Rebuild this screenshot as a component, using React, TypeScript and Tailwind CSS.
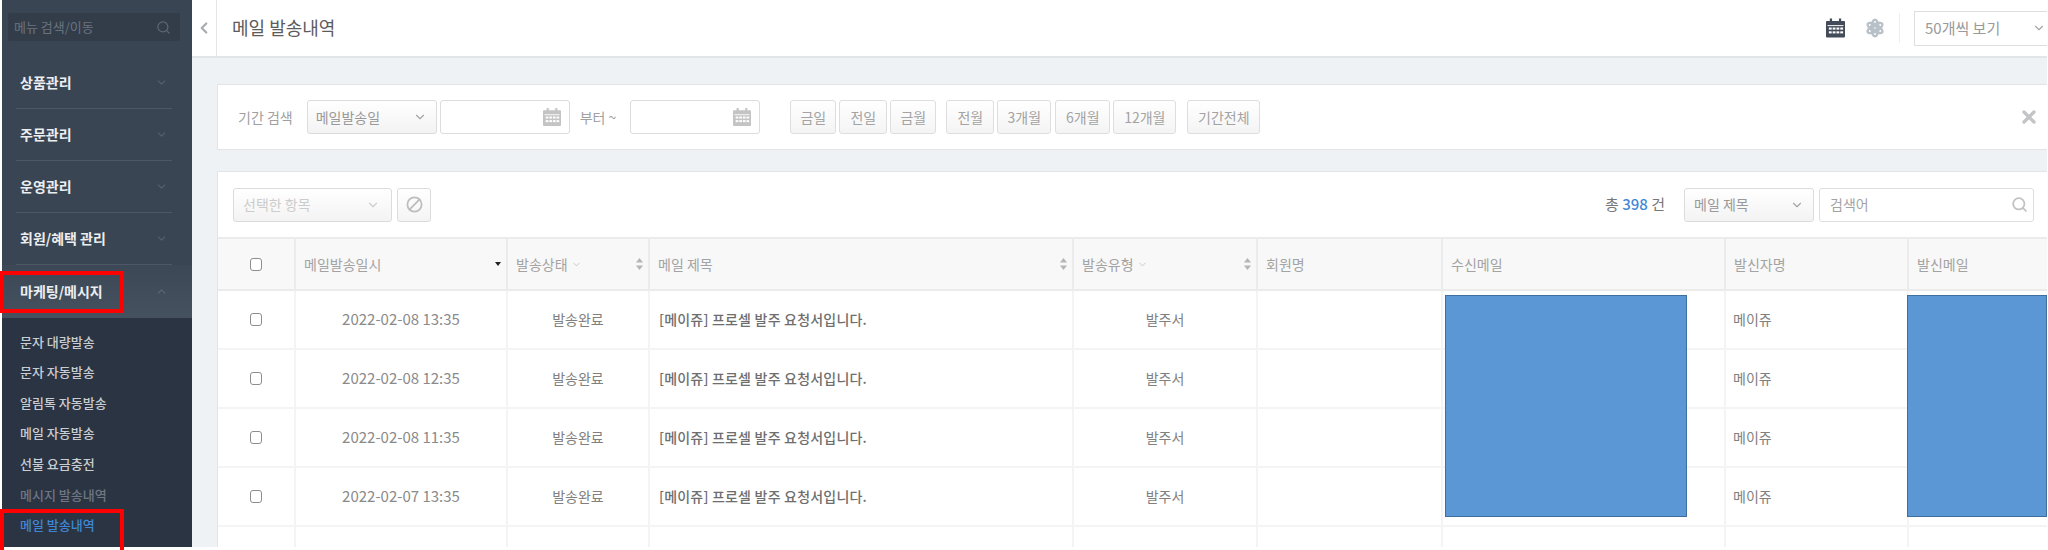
import { Ban, ChevronDown, ChevronLeft, ChevronUp, Search, X } from "lucide-react";

const groups = ["상품관리", "주문관리", "운영관리", "회원/혜택 관리"];

const subMenu = [
  { label: "문자 대량발송", color: "text-[#c9cdd2]" },
  { label: "문자 자동발송", color: "text-[#c9cdd2]" },
  { label: "알림톡 자동발송", color: "text-[#c9cdd2]" },
  { label: "메일 자동발송", color: "text-[#c9cdd2]" },
  { label: "선불 요금충전", color: "text-[#c9cdd2]" },
  { label: "메시지 발송내역", color: "text-[#6d7682]" },
  { label: "메일 발송내역", color: "text-[#3f87d6]" },
];

const rangeButtons = [
  { label: "금일", className: "w-[46px]" },
  { label: "전일", className: "w-[48px] ml-[3px]" },
  { label: "금월", className: "w-[46px] ml-[3px]" },
  { label: "전월", className: "w-[48px] ml-[10px]" },
  { label: "3개월", className: "w-[54px] ml-[3px]" },
  { label: "6개월", className: "w-[55px] ml-[4px]" },
  { label: "12개월", className: "w-[63px] ml-[3px]" },
  { label: "기간전체", className: "w-[73px] ml-[11px]" },
];

const rows = ["2022-02-08 13:35", "2022-02-08 12:35", "2022-02-08 11:35", "2022-02-07 13:35"];

const gridCols = "grid grid-cols-[76px_212px_142px_424px_184px_185px_283px_183px_140px]";

function CalendarIcon({ className }: { className?: string }) {
  return (
    <svg viewBox="0 0 20 20" className={className} fill="currentColor">
      <rect x="4" y="0" width="2.4" height="4" />
      <rect x="13.6" y="0" width="2.4" height="4" />
      <path d="M1 2.5h18a1 1 0 0 1 1 1V19a1 1 0 0 1-1 1H1a1 1 0 0 1-1-1V3.5a1 1 0 0 1 1-1z" />
      <g fill="#fff">
        <rect x="1.6" y="7" width="16.8" height="1" />
        <rect x="3" y="9.5" width="3" height="2.2" />
        <rect x="7" y="9.5" width="3" height="2.2" />
        <rect x="11" y="9.5" width="3" height="2.2" />
        <rect x="15" y="9.5" width="3" height="2.2" />
        <rect x="3" y="13.5" width="3" height="2.2" />
        <rect x="7" y="13.5" width="3" height="2.2" />
        <rect x="11" y="13.5" width="3" height="2.2" />
        <rect x="15" y="13.5" width="3" height="2.2" />
      </g>
    </svg>
  );
}

function GearIcon({ className }: { className?: string }) {
  return (
    <svg viewBox="0 0 20 20" className={className} fill="none" stroke="currentColor" strokeWidth="2.4">
      <ellipse cx="10" cy="10" rx="3.4" ry="8.4" />
      <ellipse cx="10" cy="10" rx="3.4" ry="8.4" transform="rotate(60 10 10)" />
      <ellipse cx="10" cy="10" rx="3.4" ry="8.4" transform="rotate(120 10 10)" />
      <circle cx="10" cy="10" r="2" />
    </svg>
  );
}

function SortIcon() {
  return (
    <svg viewBox="0 0 7 12" className="w-[7px] h-[12px] text-[#b5b5b5]" fill="currentColor">
      <path d="M3.5 0L7 4.5H0z" />
      <path d="M3.5 12L0 7.5h7z" />
    </svg>
  );
}

function SelectBox({ label, className, muted }: { label: string; className: string; muted?: boolean }) {
  return (
    <div className={`flex h-[34px] items-center justify-between rounded-[3px] border border-[#dcdcdc] bg-gradient-to-b from-white to-[#f3f3f3] ${className}`}>
      <span className={muted ? "text-[#cccccc]" : "text-[#999999]"}>{label}</span>
      <ChevronDown className={`w-[14px] h-[14px] ${muted ? "text-[#cccccc]" : "text-[#a5a5a5]"}`} strokeWidth={2} />
    </div>
  );
}

function DateInput() {
  return (
    <div className="flex h-[34px] w-[130px] items-center justify-end rounded-[3px] border border-[#dcdcdc] bg-white pr-[8px]">
      <CalendarIcon className="w-[18px] h-[18px] text-[#c4c4c4]" />
    </div>
  );
}

function HeadCell({ label, dropdown, sort }: { label: string; dropdown?: boolean; sort?: "down" | "both" }) {
  return (
    <div className="flex items-center border-l-2 border-[#ebebeb] pl-[8px] pr-[5px] text-[#a3a3a3]">
      <span>{label}</span>
      {dropdown && <ChevronDown className="ml-[3px] w-[11px] h-[11px] text-[#b5b5b5]" strokeWidth={1.5} />}
      {sort === "down" && <span className="ml-auto h-0 w-0 border-x-[3px] border-t-[4px] border-x-transparent border-t-[#222222]" />}
      {sort === "both" && (
        <span className="ml-auto flex">
          <SortIcon />
        </span>
      )}
    </div>
  );
}

function Checkbox() {
  return <span className="block h-[13px] w-[12px] rounded-[3px] border border-[#8d8d8d] bg-white" />;
}

function Row({ date }: { date: string }) {
  const cell = "flex items-center border-l-2 border-[#f4f4f4]";
  return (
    <div className={`${gridCols} h-[59px] border-b-2 border-[#f4f4f4] text-[#808080]`}>
      <div className="flex items-center justify-center">
        <Checkbox />
      </div>
      <div className={`${cell} justify-center text-[15px] text-[#8a8a8a]`}>{date}</div>
      <div className={`${cell} justify-center`}>발송완료</div>
      <div className={`${cell} pl-[9px] font-medium tracking-[0.2px] text-[#6e6e6e]`}>[메이쥬] 프로셀 발주 요청서입니다.</div>
      <div className={`${cell} justify-center`}>발주서</div>
      <div className={cell} />
      <div className={cell} />
      <div className={`${cell} pl-[7px]`}>메이쥬</div>
      <div className={cell} />
    </div>
  );
}

export default function App() {
  return (
    <div
      className="relative flex h-[550px] w-[2048px] overflow-hidden bg-white pb-[3px] pl-[2px] pr-[1px] text-[14px]"
      style={{ fontFamily: '"Noto Sans CJK KR", "Noto Sans", sans-serif' }}
    >
      {/* sidebar */}
      <aside className="flex w-[190px] shrink-0 flex-col bg-[#3a4553]">
        <div className="h-[57px] shrink-0 pl-[6px] pr-[12px] pt-[13px]">
          <div className="flex h-[28px] items-center justify-between rounded-[2px] bg-[#333d4a] pl-[6px] pr-[9px] text-[13px] text-[#697380]">
            <span>메뉴 검색/이동</span>
            <Search className="w-[15px] h-[15px] text-[#5c6774]" strokeWidth={2} />
          </div>
        </div>
        {groups.map((g) => (
          <div key={g} className="ml-[14px] mr-[20px] flex h-[52px] shrink-0 items-center justify-between border-b border-[#4d5866] pl-[4px] pr-[4px]">
            <span className="font-bold text-[#eceef0]">{g}</span>
            <ChevronDown className="w-[13px] h-[13px] text-[#566170]" strokeWidth={2} />
          </div>
        ))}
        <div className="flex h-[53px] shrink-0 items-center justify-between bg-gradient-to-b from-[#3d4856] to-[#465160] pl-[18px] pr-[24px]">
          <span className="font-bold text-[#eceef0]">마케팅/메시지</span>
          <ChevronUp className="w-[13px] h-[13px] text-[#5d6877]" strokeWidth={2} />
        </div>
        <div className="flex flex-1 flex-col bg-[#2b3442] pl-[18px] pt-[8px]">
          {subMenu.map((item) => (
            <div key={item.label} className={`flex h-[30.6px] shrink-0 items-center text-[13px] font-medium ${item.color}`}>
              {item.label}
            </div>
          ))}
        </div>
      </aside>

      {/* main */}
      <main className="flex min-w-0 flex-1 flex-col bg-[#eef2f5]">
        <header className="flex h-[58px] shrink-0 items-center border-b-2 border-[#e3e6e9] bg-white">
          <div className="flex h-full w-[25px] items-center justify-center border-r border-[#e3e6e9]">
            <ChevronLeft className="w-[18px] h-[18px] text-[#a8adb3]" strokeWidth={3} />
          </div>
          <h1 className="ml-[15px] -mt-[2px] text-[18px] font-normal text-[#5c5c5c]">메일 발송내역</h1>
          <div className="ml-auto flex items-center">
            <CalendarIcon className="w-[19px] h-[20px] text-[#444b58]" />
            <GearIcon className="ml-[20px] w-[20px] h-[20px] text-[#b8c0c8]" />
            <span className="ml-[14px] h-[30px] w-px bg-[#eeeeee]" />
            <div className="ml-[14px] flex h-[35px] w-[133px] items-center justify-between border border-[#dedede] border-r-0 pl-[10px] pr-[1px] text-[15px] text-[#9a9a9a]">
              <span>50개씩 보기</span>
              <ChevronDown className="w-[14px] h-[14px] text-[#a8a8a8]" strokeWidth={2} />
            </div>
          </div>
        </header>

        <section className="ml-[25px] mt-[26px] flex h-[66px] shrink-0 items-center border border-r-0 border-[#e2e5e8] bg-white pl-[20px] pr-[8px]">
          <span className="text-[#a0a0a0]">기간 검색</span>
          <SelectBox label="메일발송일" className="ml-[14px] w-[130px] pl-[8px] pr-[9px]" />
          <div className="ml-[3px]">
            <DateInput />
          </div>
          <span className="ml-[10px] mr-[14px] text-[#a0a0a0]">부터 ~</span>
          <DateInput />
          <div className="ml-[30px] flex">
            {rangeButtons.map((b) => (
              <div key={b.label} className={`flex h-[34px] items-center justify-center rounded-[3px] border border-[#dedede] bg-gradient-to-b from-white to-[#f4f4f4] text-[#a3a3a3] ${b.className}`}>
                {b.label}
              </div>
            ))}
          </div>
          <X className="ml-auto w-[20px] h-[20px] text-[#c2c4c7]" strokeWidth={4} />
        </section>

        <section className="ml-[25px] mt-[21px] flex min-h-0 flex-1 flex-col overflow-hidden border-t border-l border-[#e2e5e8] bg-white">
          <div className="flex h-[65px] shrink-0 items-center pl-[15px] pr-[13px]">
            <SelectBox label="선택한 항목" muted className="w-[159px] pl-[9px] pr-[11px]" />
            <div className="ml-[5px] flex h-[34px] w-[34px] items-center justify-center rounded-[3px] border border-[#dcdcdc] bg-gradient-to-b from-white to-[#f4f4f4]">
              <Ban className="w-[17px] h-[17px] -scale-x-100 text-[#bdbdbd]" strokeWidth={2.5} />
            </div>
            <span className="ml-auto text-[15px] text-[#777777]">
              총 <span className="font-medium text-[#3f87d6]">398</span> 건
            </span>
            <SelectBox label="메일 제목" className="ml-[19px] w-[130px] pl-[9px] pr-[9px]" />
            <div className="ml-[5px] flex h-[34px] w-[215px] items-center justify-between rounded-[3px] border border-[#dedede] bg-white pl-[10px] pr-[5px] text-[#a3a3a3]">
              <span>검색어</span>
              <Search className="w-[17px] h-[17px] text-[#c2c2c2]" strokeWidth={2.5} />
            </div>
          </div>

          <div className={`${gridCols} h-[54px] shrink-0 border-y-2 border-[#ebebeb] bg-[#f8f8f8]`}>
            <div className="flex items-center justify-center">
              <Checkbox />
            </div>
            <HeadCell label="메일발송일시" sort="down" />
            <HeadCell label="발송상태" dropdown sort="both" />
            <HeadCell label="메일 제목" sort="both" />
            <HeadCell label="발송유형" dropdown sort="both" />
            <HeadCell label="회원명" />
            <HeadCell label="수신메일" />
            <HeadCell label="발신자명" />
            <HeadCell label="발신메일" />
          </div>

          {rows.map((d, i) => (
            <Row key={i} date={d} />
          ))}
          <div className={`${gridCols} flex-1`}>
            {Array.from({ length: 9 }).map((_, i) => (
              <div key={i} className={i === 0 ? "" : "border-l-2 border-[#f4f4f4]"} />
            ))}
          </div>
        </section>
      </main>

      {/* masking boxes and red highlights drawn over the screenshot */}
      <div className="absolute left-[1445px] top-[295px] h-[222px] w-[242px] border border-[#3f6f9e] bg-[#5b97d5]" />
      <div className="absolute left-[1907px] top-[295px] h-[222px] w-[140px] border border-[#3f6f9e] bg-[#5b97d5]" />
      <div className="absolute left-0 top-[271px] h-[42px] w-[124px] border-[4px] border-[#ff0000]" />
      <div className="absolute left-0 top-[509px] h-[45px] w-[124px] border-[4px] border-[#ff0000]" />
    </div>
  );
}
